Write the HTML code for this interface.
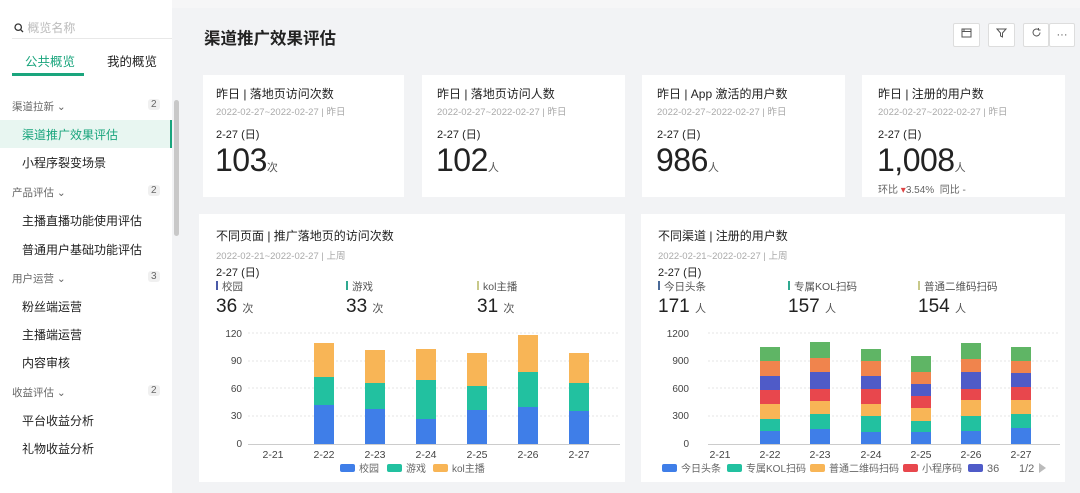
<!DOCTYPE html><html><head><meta charset="utf-8"><style>
*{margin:0;padding:0;box-sizing:border-box}
body{width:1080px;height:493px;overflow:hidden;background:#f2f3f5;font-family:"Liberation Sans","Noto Sans CJK SC",sans-serif;color:#222;position:relative}
.a{position:absolute;white-space:nowrap}
.side{left:0;top:0;width:172px;height:493px;background:#fff}
.card{background:#fff;position:absolute}
.t{font-size:12px;color:#222}
.d{font-size:9.5px;color:#aaa}
.n{font-size:32px;color:#222;letter-spacing:-0.5px}
.u{font-size:11px;color:#555}
.grp{font-size:10.5px;color:#666}
.it{font-size:12px;color:#222}
.badge{font-size:10px;color:#666;background:#f0f0f0;border-radius:3px;padding:0 3px}
.btn{position:absolute;top:23px;width:27px;height:24px;border:1px solid #ddd;background:#fff;border-radius:2px;color:#555;font-size:11px;text-align:center;line-height:22px}
</style></head><body>
<div class="a" style="left:0;top:0;width:1080px;height:8px;background:#f6f6f7"></div>
<div class="a side">
 <div class="a" style="left:14px;top:19px;font-size:12px;color:#bbb"><svg width="10" height="10" viewBox="0 0 10 10" style="vertical-align:-1px"><circle cx="4.2" cy="4.2" r="3.2" fill="none" stroke="#333" stroke-width="1.3"/><path d="M6.6 6.6L9 9" stroke="#333" stroke-width="1.3"/></svg> 概览名称</div>
 <div class="a" style="left:12px;top:38px;width:160px;height:1px;background:#e8e8e8"></div>
 <div class="a" style="left:25px;top:51px;font-size:12.5px;color:#1aa57d">公共概览</div>
 <div class="a" style="left:107px;top:51px;font-size:12.5px;color:#222">我的概览</div>
 <div class="a" style="left:12px;top:73px;width:72px;height:3px;background:#1aa57d"></div>
 <div class="a grp" style="left:12px;top:99px">渠道拉新 ⌄</div><div class="a badge" style="left:148px;top:99px">2</div>
 <div class="a" style="left:0;top:120px;width:172px;height:28px;background:#e8f6f1"></div>
 <div class="a" style="left:170px;top:120px;width:2px;height:28px;background:#1aa57d"></div>
 <div class="a it" style="left:22px;top:126px;color:#1aa57d">渠道推广效果评估</div>
 <div class="a it" style="left:22px;top:154px">小程序裂变场景</div>
 <div class="a grp" style="left:12px;top:185px">产品评估 ⌄</div><div class="a badge" style="left:148px;top:185px">2</div>
 <div class="a it" style="left:22px;top:212px">主播直播功能使用评估</div>
 <div class="a it" style="left:22px;top:241px">普通用户基础功能评估</div>
 <div class="a grp" style="left:12px;top:271px">用户运营 ⌄</div><div class="a badge" style="left:148px;top:271px">3</div>
 <div class="a it" style="left:22px;top:298px">粉丝端运营</div>
 <div class="a it" style="left:22px;top:326px">主播端运营</div>
 <div class="a it" style="left:22px;top:354px">内容审核</div>
 <div class="a grp" style="left:12px;top:385px">收益评估 ⌄</div><div class="a badge" style="left:148px;top:385px">2</div>
 <div class="a it" style="left:22px;top:412px">平台收益分析</div>
 <div class="a it" style="left:22px;top:440px">礼物收益分析</div>
</div>
<div class="a" style="left:174px;top:100px;width:5px;height:136px;background:#c8c8c8;border-radius:3px"></div>
<div class="a" style="left:182px;top:8px;width:898px;height:485px;background:#f2f3f5"></div>
<div class="a" style="left:204px;top:25px;font-size:16.5px;font-weight:bold;color:#222">渠道推广效果评估</div>
<div class="btn" style="left:953px"><svg width="11" height="10" viewBox="0 0 11 10"><rect x="1" y="1" width="9" height="8" fill="none" stroke="#555"/><path d="M1 3.5H10M3 1V3.5" stroke="#555"/></svg></div>
<div class="btn" style="left:988px"><svg width="11" height="10" viewBox="0 0 11 10"><path d="M1 1H10L6.5 5V9L4.5 8V5Z" fill="none" stroke="#555"/></svg></div>
<div class="btn" style="left:1023px;width:26px"><svg width="11" height="11" viewBox="0 0 11 11"><path d="M9 5.5A3.5 3.5 0 1 1 7.5 2.6M7.5 1V3H9.5" fill="none" stroke="#555"/></svg></div>
<div class="btn" style="left:1049px;width:26px">···</div>

<div class="card" style="left:203px;top:75px;width:201px;height:122px"></div>
<div class="card" style="left:422px;top:75px;width:203px;height:122px"></div>
<div class="card" style="left:642px;top:75px;width:203px;height:122px"></div>
<div class="card" style="left:862px;top:75px;width:203px;height:122px"></div>
<div class="a t" style="left:216px;top:85px">昨日 | 落地页访问次数</div>
<div class="a d" style="left:216px;top:104px">2022-02-27~2022-02-27 | 昨日</div>
<div class="a" style="left:216px;top:126px;font-size:11px">2-27 (日)</div>
<div class="a n" style="left:215px;top:142px">103<span class="u">次</span></div>
<div class="a t" style="left:437px;top:85px">昨日 | 落地页访问人数</div>
<div class="a d" style="left:437px;top:104px">2022-02-27~2022-02-27 | 昨日</div>
<div class="a" style="left:437px;top:126px;font-size:11px">2-27 (日)</div>
<div class="a n" style="left:436px;top:142px">102<span class="u">人</span></div>
<div class="a t" style="left:657px;top:85px">昨日 | App 激活的用户数</div>
<div class="a d" style="left:657px;top:104px">2022-02-27~2022-02-27 | 昨日</div>
<div class="a" style="left:657px;top:126px;font-size:11px">2-27 (日)</div>
<div class="a n" style="left:656px;top:142px">986<span class="u">人</span></div>
<div class="a t" style="left:878px;top:85px">昨日 | 注册的用户数</div>
<div class="a d" style="left:878px;top:104px">2022-02-27~2022-02-27 | 昨日</div>
<div class="a" style="left:878px;top:126px;font-size:11px">2-27 (日)</div>
<div class="a n" style="left:877px;top:142px">1,008<span class="u">人</span></div>
<div class="a" style="left:878px;top:181px;font-size:10px;color:#666">环比 <span style="color:#d44">▾</span>3.54% &nbsp;同比 -</div>

<div class="card" style="left:199px;top:214px;width:426px;height:268px"></div>
<div class="card" style="left:641px;top:214px;width:424px;height:268px"></div>
<div class="a t" style="left:216px;top:227px">不同页面 | 推广落地页的访问次数</div>
<div class="a d" style="left:216px;top:248px">2022-02-21~2022-02-27 | 上周</div>
<div class="a" style="left:216px;top:264px;font-size:11px">2-27 (日)</div>
<div class="a" style="left:216px;top:279px;font-size:10.5px;color:#555"><span style="display:inline-block;width:2px;height:9px;background:#4a5aa8;margin-right:4px"></span>校园</div>
<div class="a" style="left:346px;top:279px;font-size:10.5px;color:#555"><span style="display:inline-block;width:2px;height:9px;background:#2fa990;margin-right:4px"></span>游戏</div>
<div class="a" style="left:477px;top:279px;font-size:10.5px;color:#555"><span style="display:inline-block;width:2px;height:9px;background:#c8c98a;margin-right:4px"></span>kol主播</div>
<div class="a" style="left:216px;top:296px;font-size:19px">36 <span class="u">次</span></div>
<div class="a" style="left:346px;top:296px;font-size:19px">33 <span class="u">次</span></div>
<div class="a" style="left:477px;top:296px;font-size:19px">31 <span class="u">次</span></div>

<div class="a t" style="left:658px;top:227px">不同渠道 | 注册的用户数</div>
<div class="a d" style="left:658px;top:248px">2022-02-21~2022-02-27 | 上周</div>
<div class="a" style="left:658px;top:264px;font-size:11px">2-27 (日)</div>
<div class="a" style="left:658px;top:279px;font-size:10.5px;color:#555"><span style="display:inline-block;width:2px;height:9px;background:#4a6a98;margin-right:4px"></span>今日头条</div>
<div class="a" style="left:788px;top:279px;font-size:10.5px;color:#555"><span style="display:inline-block;width:2px;height:9px;background:#2fa990;margin-right:4px"></span>专属KOL扫码</div>
<div class="a" style="left:918px;top:279px;font-size:10.5px;color:#555"><span style="display:inline-block;width:2px;height:9px;background:#c8c98a;margin-right:4px"></span>普通二维码扫码</div>
<div class="a" style="left:658px;top:296px;font-size:19px">171 <span class="u">人</span></div>
<div class="a" style="left:788px;top:296px;font-size:19px">157 <span class="u">人</span></div>
<div class="a" style="left:918px;top:296px;font-size:19px">154 <span class="u">人</span></div>

<svg class="a" style="left:0;top:0" width="1080" height="493" font-family="Liberation Sans, sans-serif" font-size="10" fill="#444">
<g stroke="#e6e6e6" stroke-dasharray="2 2"><path d="M248 333H620M248 361H620M248 388H620M248 416H620M708 333H1060M708 361H1060M708 388H1060M708 416H1060"/></g>
<path d="M248 444.5H620M708 444.5H1060" stroke="#ccc"/>
<g text-anchor="end"><text x="242" y="337">120</text><text x="242" y="364">90</text><text x="242" y="392">60</text><text x="242" y="419">30</text><text x="242" y="447">0</text>
<text x="689" y="337">1200</text><text x="689" y="364">900</text><text x="689" y="392">600</text><text x="689" y="419">300</text><text x="689" y="447">0</text></g>
<g text-anchor="middle" font-size="10.5"><text x="273" y="458">2-21</text><text x="324" y="458">2-22</text><text x="375" y="458">2-23</text><text x="426" y="458">2-24</text><text x="477" y="458">2-25</text><text x="528" y="458">2-26</text><text x="579" y="458">2-27</text>
<text x="720" y="458">2-21</text><text x="770" y="458">2-22</text><text x="820" y="458">2-23</text><text x="871" y="458">2-24</text><text x="921" y="458">2-25</text><text x="971" y="458">2-26</text><text x="1021" y="458">2-27</text></g>
<g>
<rect x="314" y="405" width="20" height="39" fill="#3f7ee8"/><rect x="314" y="377" width="20" height="28" fill="#22c1a0"/><rect x="314" y="343" width="20" height="34" fill="#f8b556"/>
<rect x="365" y="409" width="20" height="35" fill="#3f7ee8"/><rect x="365" y="383" width="20" height="26" fill="#22c1a0"/><rect x="365" y="350" width="20" height="33" fill="#f8b556"/>
<rect x="416" y="419" width="20" height="25" fill="#3f7ee8"/><rect x="416" y="380" width="20" height="39" fill="#22c1a0"/><rect x="416" y="349" width="20" height="31" fill="#f8b556"/>
<rect x="467" y="410" width="20" height="34" fill="#3f7ee8"/><rect x="467" y="386" width="20" height="24" fill="#22c1a0"/><rect x="467" y="353" width="20" height="33" fill="#f8b556"/>
<rect x="518" y="407" width="20" height="37" fill="#3f7ee8"/><rect x="518" y="372" width="20" height="35" fill="#22c1a0"/><rect x="518" y="335" width="20" height="37" fill="#f8b556"/>
<rect x="569" y="411" width="20" height="33" fill="#3f7ee8"/><rect x="569" y="383" width="20" height="28" fill="#22c1a0"/><rect x="569" y="353" width="20" height="30" fill="#f8b556"/>
</g>
<g>
<rect x="760" y="431" width="20" height="13" fill="#3f7ee8"/><rect x="760" y="419" width="20" height="12" fill="#22c1a0"/><rect x="760" y="404" width="20" height="15" fill="#f8b556"/><rect x="760" y="390" width="20" height="14" fill="#e8474d"/><rect x="760" y="376" width="20" height="14" fill="#4f5bc8"/><rect x="760" y="361" width="20" height="15" fill="#f0844d"/><rect x="760" y="347" width="20" height="14" fill="#5fb565"/>
<rect x="810" y="429" width="20" height="15" fill="#3f7ee8"/><rect x="810" y="414" width="20" height="15" fill="#22c1a0"/><rect x="810" y="401" width="20" height="13" fill="#f8b556"/><rect x="810" y="389" width="20" height="12" fill="#e8474d"/><rect x="810" y="372" width="20" height="17" fill="#4f5bc8"/><rect x="810" y="358" width="20" height="14" fill="#f0844d"/><rect x="810" y="342" width="20" height="16" fill="#5fb565"/>
<rect x="861" y="432" width="20" height="12" fill="#3f7ee8"/><rect x="861" y="416" width="20" height="16" fill="#22c1a0"/><rect x="861" y="404" width="20" height="12" fill="#f8b556"/><rect x="861" y="389" width="20" height="15" fill="#e8474d"/><rect x="861" y="376" width="20" height="13" fill="#4f5bc8"/><rect x="861" y="361" width="20" height="15" fill="#f0844d"/><rect x="861" y="349" width="20" height="12" fill="#5fb565"/>
<rect x="911" y="432" width="20" height="12" fill="#3f7ee8"/><rect x="911" y="421" width="20" height="11" fill="#22c1a0"/><rect x="911" y="408" width="20" height="13" fill="#f8b556"/><rect x="911" y="396" width="20" height="12" fill="#e8474d"/><rect x="911" y="384" width="20" height="12" fill="#4f5bc8"/><rect x="911" y="372" width="20" height="12" fill="#f0844d"/><rect x="911" y="356" width="20" height="16" fill="#5fb565"/>
<rect x="961" y="431" width="20" height="13" fill="#3f7ee8"/><rect x="961" y="416" width="20" height="15" fill="#22c1a0"/><rect x="961" y="400" width="20" height="16" fill="#f8b556"/><rect x="961" y="389" width="20" height="11" fill="#e8474d"/><rect x="961" y="372" width="20" height="17" fill="#4f5bc8"/><rect x="961" y="359" width="20" height="13" fill="#f0844d"/><rect x="961" y="343" width="20" height="16" fill="#5fb565"/>
<rect x="1011" y="428" width="20" height="16" fill="#3f7ee8"/><rect x="1011" y="414" width="20" height="14" fill="#22c1a0"/><rect x="1011" y="400" width="20" height="14" fill="#f8b556"/><rect x="1011" y="387" width="20" height="13" fill="#e8474d"/><rect x="1011" y="373" width="20" height="14" fill="#4f5bc8"/><rect x="1011" y="361" width="20" height="12" fill="#f0844d"/><rect x="1011" y="347" width="20" height="14" fill="#5fb565"/>
</g>
<g font-size="10" fill="#666">
<rect x="340" y="464" width="15" height="8" rx="2" fill="#3f7ee8"/><text x="359" y="472">校园</text>
<rect x="387" y="464" width="15" height="8" rx="2" fill="#22c1a0"/><text x="406" y="472">游戏</text>
<rect x="433" y="464" width="15" height="8" rx="2" fill="#f8b556"/><text x="452" y="472">kol主播</text>
<rect x="662" y="464" width="15" height="8" rx="2" fill="#3f7ee8"/><text x="681" y="472">今日头条</text>
<rect x="727" y="464" width="15" height="8" rx="2" fill="#22c1a0"/><text x="746" y="472">专属KOL扫码</text>
<rect x="810" y="464" width="15" height="8" rx="2" fill="#f8b556"/><text x="829" y="472">普通二维码扫码</text>
<rect x="903" y="464" width="15" height="8" rx="2" fill="#e8474d"/><text x="922" y="472">小程序码</text>
<rect x="968" y="464" width="15" height="8" rx="2" fill="#4f5bc8"/><text x="987" y="472" font-size="11">36</text>
<text x="1019" y="472" font-size="11">1/2</text><path d="M1039 463V473L1046 468Z" fill="#bbb"/>
</g>
</svg>
</body></html>
